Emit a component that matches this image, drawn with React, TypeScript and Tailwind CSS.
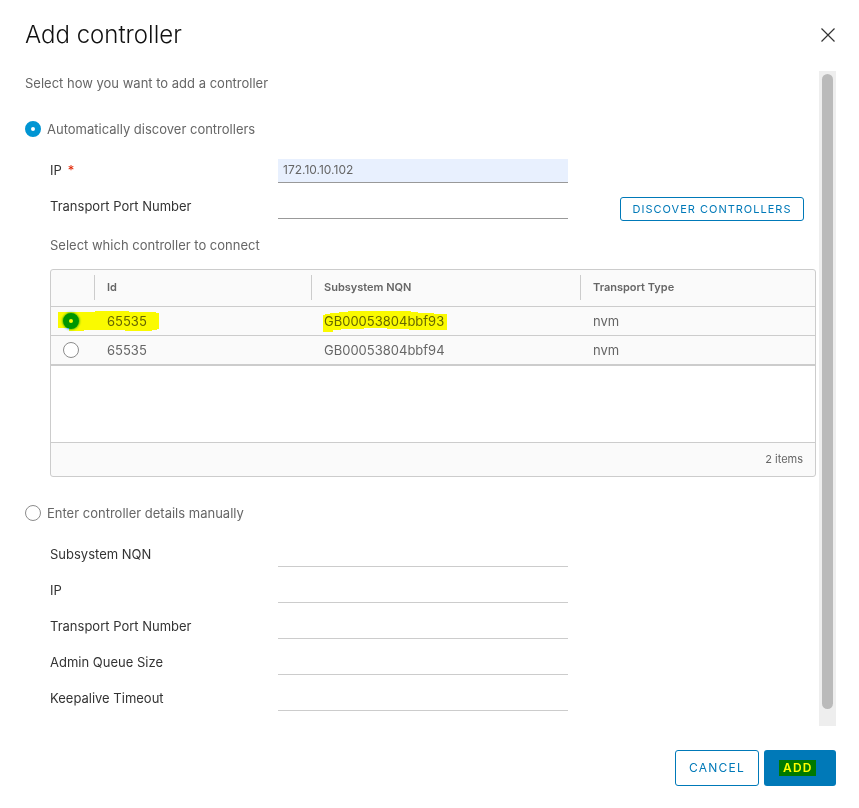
import { useState } from 'react'

const CONTROLLERS = [
  { id: '65535', nqn: 'GB00053804bbf93', transport: 'nvm' },
  { id: '65535', nqn: 'GB00053804bbf94', transport: 'nvm' },
]

const MANUAL_FIELDS = [
  ['manual-nqn', 'Subsystem NQN'],
  ['manual-ip', 'IP'],
  ['manual-port', 'Transport Port Number'],
  ['manual-queue', 'Admin Queue Size'],
  ['manual-keepalive', 'Keepalive Timeout'],
]

const radio =
  'appearance-none block shrink-0 size-4 rounded-full border border-[#8c8c8c] bg-white checked:border-6 checked:border-[#0095d3]'

function Field({ id, label, required, value, active }: {
  id: string
  label: string
  required?: boolean
  value?: string
  active?: boolean
}) {
  return (
    <div className="flex h-6 items-center">
      <label htmlFor={id} className="w-57 shrink-0 pb-0.5 text-[#333333]">
        {label}
        {required && <span className="ml-1.5 text-[#e12200]">*</span>}
      </label>
      <input
        id={id}
        type="text"
        defaultValue={value}
        className={
          'h-6 w-72.5 min-w-0 border-b px-[5px] pb-0.5 text-xs text-[#666666] outline-none ' +
          (active ? 'border-[#999999] ' : 'border-[#cccccc] ') +
          (value ? 'bg-[#e8f0fe]' : 'bg-transparent')
        }
      />
    </div>
  )
}

export default function App() {
  const [mode, setMode] = useState('auto')
  const [selected, setSelected] = useState(0)

  return (
    <div
      role="dialog"
      aria-labelledby="dialog-title"
      className="bg-white pb-[22px] pl-[25px] pr-[23px] font-['Inter','Liberation_Sans',sans-serif] text-[13px] leading-6 text-[#666666]"
    >
      <header className="flex h-[71px] items-center justify-between pb-0.5">
        <h1 id="dialog-title" className="text-2xl font-light text-[#111111]">Add controller</h1>
        <button type="button" aria-label="Close" className="text-[#333333]">
          <svg width="16" height="16" viewBox="0 0 16 16" fill="none" stroke="currentColor" strokeWidth="1.2">
            <path d="M1.5 1.5l13 13M14.5 1.5l-13 13" />
          </svg>
        </button>
      </header>

      <div className="flex gap-[3px]">
        <div className="min-w-0 flex-1 pb-[15px]">
          <p>Select how you want to add a controller</p>

          <label className="mt-[22px] flex items-center gap-1.5">
            <input type="radio" name="mode" checked={mode === 'auto'} onChange={() => setMode('auto')} className={radio} />
            Automatically discover controllers
          </label>

          <div className="mt-[18px] pl-[25px]">
            <div className="flex items-end justify-between pr-3">
              <div className="flex flex-col gap-3 pb-0.5">
                <Field id="auto-ip" label="IP" required value="172.10.10.102" active />
                <Field id="auto-port" label="Transport Port Number" active />
              </div>
              <button
                type="button"
                className="h-6 w-46 shrink-0 rounded-[3px] border border-[#0079b8] text-[11px] leading-none tracking-[1px] text-[#0079b8]"
              >
                DISCOVER CONTROLLERS
              </button>
            </div>

            <p className="mt-3">Select which controller to connect</p>

            <div className="mt-3 overflow-hidden rounded-[3px] border border-[#cccccc] bg-[#fafafa]">
              <table className="w-full table-fixed border-collapse text-left">
                <thead>
                  <tr className="h-9 border-b border-[#cccccc] text-[11px]">
                    <th className="w-11 p-0"><div className="h-[25px] border-r border-[#cccccc]" /></th>
                    <th className="w-[217px] p-0 font-semibold">
                      <div className="h-[25px] border-r border-[#cccccc] pl-3">Id</div>
                    </th>
                    <th className="w-[269px] p-0 font-semibold">
                      <div className="h-[25px] border-r border-[#cccccc] pl-3">Subsystem NQN</div>
                    </th>
                    <th className="p-0 font-semibold"><div className="h-[25px] pl-3">Transport Type</div></th>
                  </tr>
                </thead>
                <tbody>
                  {CONTROLLERS.map((c, i) => (
                    <tr key={c.nqn} className="h-[29px] border-b border-[#cccccc]">
                      <td className="relative p-0 pl-3">
                        <input
                          type="radio"
                          name="controller"
                          aria-label={c.nqn}
                          checked={selected === i}
                          onChange={() => setSelected(i)}
                          className={radio + ' checked:shadow-[0_0_2px_1px_#6fc4e6]'}
                        />
                        {/* marker pen stroke */}
                        {i === 0 && (
                          <svg
                            className="pointer-events-none absolute left-0 top-0 z-10 mix-blend-multiply"
                            width="110" height="28" viewBox="51 307 110 28" fill="#ffff00"
                          >
                            <path d="M58 312H95V311H129V312H156V313H159V329H157V330H152V331H125V330H84V331H69V328H58Z" />
                          </svg>
                        )}
                      </td>
                      <td className="p-0 pl-3">{c.id}</td>
                      <td className="relative p-0 pl-3">
                        {c.nqn}
                        {i === 0 && (
                          <svg
                            className="pointer-events-none absolute left-0 top-0 z-10 mix-blend-multiply"
                            width="140" height="28" viewBox="312 307 140 28" fill="#ffff00"
                          >
                            <path d="M323 315H325V314H330V313H339V312H348V311H411V312H418V313H434V314H447V330H409V329H387V328H364V329H341V330H333V332H323Z" />
                          </svg>
                        )}
                      </td>
                      <td className="p-0 pl-3">{c.transport}</td>
                    </tr>
                  ))}
                </tbody>
              </table>
              <div className="h-[77px] border-t border-[#cccccc] bg-white" />
              <div className="flex h-[34px] items-center justify-end border-t border-[#cccccc] pr-3 text-[11px]">
                2 items
              </div>
            </div>
          </div>

          <label className="mt-6 flex items-center gap-1.5">
            <input type="radio" name="mode" checked={mode === 'manual'} onChange={() => setMode('manual')} className={radio} />
            Enter controller details manually
          </label>

          <div className="mt-[18px] flex flex-col gap-3 pl-[25px]">
            {MANUAL_FIELDS.map(([id, label]) => (
              <Field key={id} id={id} label={label} />
            ))}
          </div>
        </div>

        {/* Scrollbar */}
        <div className="flex w-[17px] shrink-0 flex-col bg-[#eeeeee] px-[3px] pb-[17px] pt-[3px]">
          <div className="flex-1 rounded-full bg-[#bababa]" />
        </div>
      </div>

      <footer className="mt-6 flex justify-end gap-[5px]">
        <button type="button" className="h-9 w-21 rounded-[3px] border border-[#0079b8] text-xs tracking-widest text-[#0079b8]">
          CANCEL
        </button>
        <button type="button" className="flex h-9 w-18 items-center rounded-[3px] bg-[#0079b8] pl-[15px] text-xs font-semibold tracking-widest text-white">
          <mark className="h-4 w-[37px] bg-[#007900] pl-1 text-left leading-4 text-[#ffff00]">ADD</mark>
        </button>
      </footer>
    </div>
  )
}
